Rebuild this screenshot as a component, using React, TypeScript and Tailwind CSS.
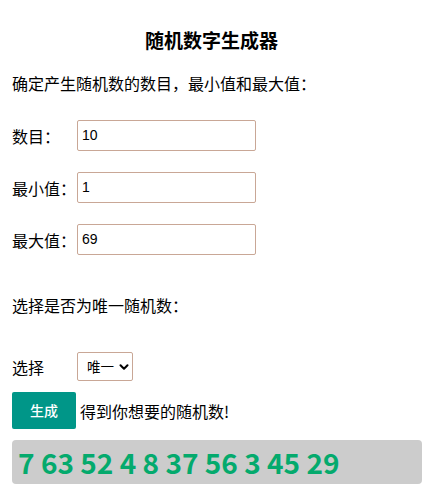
import { ChevronDown } from "lucide-react";

const FIELDS = [
  { label: "数目：", value: "10" },
  { label: "最小值：", value: "1" },
  { label: "最大值：", value: "69" },
];

const RESULT = [7, 63, 52, 4, 8, 37, 56, 3, 45, 29];

export default function App() {
  return (
    <div
      className="min-h-[490px] w-[430px] bg-white pl-3 pr-2 pt-[28px] text-black"
      style={{ fontFamily: '"Noto Sans CJK SC", "Liberation Sans", sans-serif' }}
    >
      <h1 className="h-6 pr-[11px] text-center text-[19px] font-bold leading-6">随机数字生成器</h1>

      <p className="mt-[19px] h-6 text-[16px] leading-6">确定产生随机数的数目，最小值和最大值：</p>

      {/* Inputs */}
      <div className="mt-[25px] flex flex-col gap-[21px]">
        {FIELDS.map((f) => (
          <div key={f.label} className="flex h-[31px] items-center">
            <label className="w-[65px] text-[16px] leading-6">{f.label}</label>
            <div className="flex h-[31px] w-[179px] items-center rounded-[2px] border border-[#c9a796] px-[4px] font-['Liberation_Sans',sans-serif] text-[14px]">
              {f.value}
            </div>
          </div>
        ))}
      </div>

      <p className="mt-[38px] h-6 text-[16px] leading-6">选择是否为唯一随机数：</p>

      {/* Select */}
      <div className="mt-[35px] flex h-[29px] items-center">
        <label className="w-[65px] text-[16px] leading-6">选择</label>
        <div className="flex h-[29px] w-[56px] items-center gap-[3px] rounded-[2px] border border-[#c9a796] pl-[9px] text-[13.5px]">
          <span>唯一</span>
          <ChevronDown className="size-[14px]" strokeWidth={3.5} />
        </div>
      </div>

      {/* Button */}
      <div className="mt-[11px] flex h-[37px] items-center gap-[4px]">
        <button className="h-[37px] w-[64px] rounded-[2px] bg-[#009688] text-[14px] font-medium text-white">
          生成
        </button>
        <span className="text-[16px] leading-6">得到你想要的随机数!</span>
      </div>

      {/* Result */}
      <div className="mt-[11px] flex h-[44px] items-center rounded-[4px] bg-[#cccccc] px-[6px]">
        <span className="text-[28px] font-bold leading-none text-[#04AA6D]">{RESULT.join(" ")}</span>
      </div>
    </div>
  );
}
